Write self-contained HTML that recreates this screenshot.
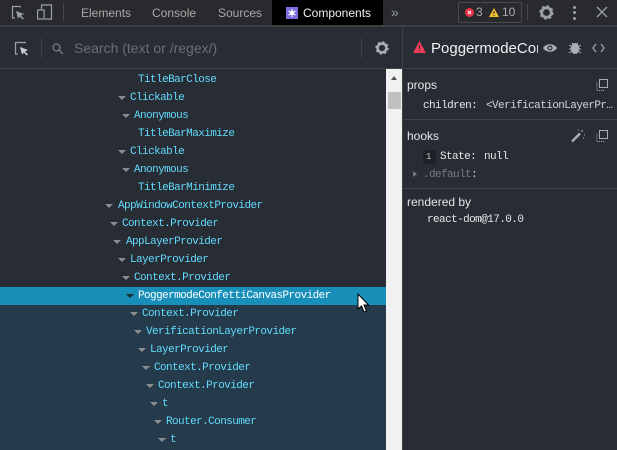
<!DOCTYPE html>
<html><head><meta charset="utf-8">
<style>
html,body{margin:0;padding:0;background:#282c34}
#r{position:relative;width:617px;height:450px;overflow:hidden;background:#282c34;font-family:"Liberation Sans",sans-serif}
.a{position:absolute;white-space:nowrap}
.t{font-size:12px;color:#a9a9a9;top:6px;line-height:14px}
.m{font-family:"Liberation Mono",monospace;font-size:11px;letter-spacing:-.58px;line-height:18px;margin-top:1px}
.row{position:absolute;height:18px;color:#61dafb;white-space:nowrap;font-family:"Liberation Mono",monospace;font-size:11px;letter-spacing:-.58px;line-height:18px;margin-top:1px}
.tri{position:absolute;width:0;height:0;margin-left:-1px;border-left:4px solid transparent;border-right:4px solid transparent;border-top:4px solid #8a8d92}
svg{position:absolute;overflow:visible}
</style></head><body><div id="r">
<div class="a" style="left:0;top:0;width:617px;height:25px;background:#292a2d"></div>
<div class="a" style="left:0;top:25px;width:617px;height:2px;background:#3d3e41"></div>
<svg style="left:11px;top:5px" width="14" height="15" fill="none"><path d="M10 1.500H1.500V13H4" stroke="#9aa0a6" stroke-width="1.200"/><path d="M5 6l8 3-3 1.500 3 3-1.500 1-2.500-3-2 2z" fill="#9aa0a6"/></svg>
<svg style="left:37px;top:4px" width="16" height="16" fill="none" stroke="#9aa0a6" stroke-width="1.200"><path d="M4.500 6V1h10v14H8"/><rect x="0.600" y="6" width="6.500" height="9"/></svg>
<div class="a" style="left:63px;top:4px;width:1px;height:16px;background:#47484b"></div>
<div class="a t" style="left:81px">Elements</div>
<div class="a t" style="left:152px">Console</div>
<div class="a t" style="left:218px">Sources</div>
<div class="a" style="left:272px;top:0;width:111px;height:25px;background:#000"></div>
<div class="a" style="left:286px;top:7px;width:12px;height:12px;background:#7d6fe0"></div>
<svg style="left:286px;top:7px" width="12" height="12" stroke="#fff" stroke-width="1.100"><path d="M6 2v8M2.500 4l7 4M9.500 4l-7 4"/><circle cx="6" cy="6" r="2" fill="#fff" stroke="none"/></svg>
<div class="a t" style="left:303px;color:#f1f1f1">Components</div>
<div class="a" style="left:391px;top:3px;font-size:14px;line-height:18px;color:#9aa0a6">»</div>
<div class="a" style="left:458px;top:2px;width:62px;height:19px;border:1px solid #4a4b4e;border-radius:2px"></div>
<div class="a" style="left:465px;top:8px;width:9px;height:9px;border-radius:50%;background:#e8334b"></div>
<svg style="left:465px;top:8px" width="9" height="9" stroke="#fff" stroke-width="1"><path d="M3 3l3 3M6 3l-3 3"/></svg>
<div class="a" style="left:476px;top:5px;font-size:12px;line-height:14px;color:#a9a9a9">3</div>
<svg style="left:489px;top:8px" width="10" height="9"><path d="M5 0l5 9H0z" fill="#f2c12e"/><path d="M4.500 3h1v3h-1zM4.500 7h1v1h-1z" fill="#222"/></svg>
<div class="a" style="left:502px;top:5px;font-size:12px;line-height:14px;color:#a9a9a9">10</div>
<div class="a" style="left:527px;top:4px;width:1px;height:16px;background:#47484b"></div>
<svg style="left:539px;top:5px" width="15" height="15"><circle cx="7.500" cy="7.500" r="4.800" fill="none" stroke="#9aa0a6" stroke-width="2.800"/><circle cx="7.500" cy="7.500" r="6.200" fill="none" stroke="#9aa0a6" stroke-width="2" stroke-dasharray="2.400 2.470"/></svg>
<div class="a" style="left:573px;top:6px;width:3px;height:3px;border-radius:50%;background:#9aa0a6;box-shadow:0 5px 0 #9aa0a6,0 11px 0 #9aa0a6"></div>
<svg style="left:597px;top:7px" width="10" height="10" stroke="#9aa0a6" stroke-width="1.300"><path d="M0 0l10 10M10 0L0 10"/></svg>

<div class="a" style="left:0;top:27px;width:402px;height:42px;background:#282c34"></div>
<div class="a" style="left:0;top:68px;width:617px;height:1px;background:#3d4148"></div>
<svg style="left:14px;top:41px" width="15" height="15" fill="none"><path d="M12 1.500H1.500V13H4" stroke="#9aa0a6" stroke-width="1.200"/><path d="M6 6l8 3-3 1.500 3 3-1.500 1-2.500-3-2 2z" fill="#c8cacc"/></svg>
<div class="a" style="left:41px;top:38px;width:1px;height:20px;background:#3d4148"></div>
<svg style="left:52px;top:43px" width="12" height="12" fill="none" stroke="#777b81" stroke-width="1.300"><circle cx="4.500" cy="4.500" r="3.500"/><path d="M7 7l4 4"/></svg>
<div class="a" style="left:74px;top:40px;font-size:14px;line-height:17px;color:#6b6e73">Search (text or /regex/)</div>
<div class="a" style="left:361px;top:38px;width:1px;height:20px;background:#3d4148"></div>
<svg style="left:375px;top:41px" width="14" height="14"><circle cx="7" cy="7" r="4.400" fill="none" stroke="#a9acb0" stroke-width="2.600"/><circle cx="7" cy="7" r="5.800" fill="none" stroke="#a9acb0" stroke-width="1.800" stroke-dasharray="2.300 2.250"/></svg>

<div class="a" style="left:0;top:69px;width:386px;height:381px;background:#282c34"></div>
<div class="a" style="left:0;top:304px;width:386px;height:146px;background:#253a4a"></div>
<div class="a" style="left:0;top:287px;width:386px;height:18px;background:#178fb9"></div>

<div class="row" style="left:138px;top:70px">TitleBarClose</div>
<div class="tri" style="left:119px;top:96px"></div><div class="row" style="left:130px;top:88px">Clickable</div>
<div class="tri" style="left:123px;top:114px"></div><div class="row" style="left:134px;top:106px">Anonymous</div>
<div class="row" style="left:138px;top:124px">TitleBarMaximize</div>
<div class="tri" style="left:119px;top:150px"></div><div class="row" style="left:130px;top:142px">Clickable</div>
<div class="tri" style="left:123px;top:168px"></div><div class="row" style="left:134px;top:160px">Anonymous</div>
<div class="row" style="left:138px;top:178px">TitleBarMinimize</div>
<div class="tri" style="left:106px;top:204px"></div><div class="row" style="left:118px;top:196px">AppWindowContextProvider</div>
<div class="tri" style="left:111px;top:222px"></div><div class="row" style="left:122px;top:214px">Context.Provider</div>
<div class="tri" style="left:114px;top:240px"></div><div class="row" style="left:126px;top:232px">AppLayerProvider</div>
<div class="tri" style="left:119px;top:258px"></div><div class="row" style="left:130px;top:250px">LayerProvider</div>
<div class="tri" style="left:123px;top:276px"></div><div class="row" style="left:134px;top:268px">Context.Provider</div>
<div class="tri" style="left:127px;top:294px;border-top-color:#1d2b33"></div><div class="row" style="left:138px;top:286px;color:#fff">PoggermodeConfettiCanvasProvider</div>
<div class="tri" style="left:131px;top:312px"></div><div class="row" style="left:142px;top:304px">Context.Provider</div>
<div class="tri" style="left:135px;top:330px"></div><div class="row" style="left:146px;top:322px">VerificationLayerProvider</div>
<div class="tri" style="left:139px;top:348px"></div><div class="row" style="left:150px;top:340px">LayerProvider</div>
<div class="tri" style="left:143px;top:366px"></div><div class="row" style="left:154px;top:358px">Context.Provider</div>
<div class="tri" style="left:147px;top:384px"></div><div class="row" style="left:158px;top:376px">Context.Provider</div>
<div class="tri" style="left:151px;top:402px"></div><div class="row" style="left:162px;top:394px">t</div>
<div class="tri" style="left:155px;top:420px"></div><div class="row" style="left:166px;top:412px">Router.Consumer</div>
<div class="tri" style="left:159px;top:438px"></div><div class="row" style="left:170px;top:430px">t</div>

<svg style="left:357px;top:293px" width="13" height="20"><path d="M1 1v15l3.500-3 2.500 6 2.500-1-2.500-6h4.500z" fill="#fff" stroke="#000" stroke-width="1"/></svg>

<div class="a" style="left:386px;top:69px;width:16px;height:381px;background:#f1f1f1"></div>
<div class="a" style="left:391px;top:76px;width:0;height:0;border-left:3.500px solid transparent;border-right:3.500px solid transparent;border-bottom:4px solid #505050"></div>
<div class="a" style="left:388px;top:92px;width:13px;height:17px;background:#c0c0c0"></div>
<div class="a" style="left:402px;top:27px;width:1px;height:423px;background:#3d4148"></div>

<svg style="left:413px;top:41px" width="13" height="12"><path d="M6.500 0l6.500 12H0z" fill="#ef3e55"/><path d="M6 4h1v4H6zM6 9h1v1H6z" fill="#282c34"/></svg>
<div class="a" style="left:431px;top:40px;width:107px;overflow:hidden;font-size:15px;line-height:18px;color:#f0f0f0">PoggermodeConfettiCanvasProvider</div>
<svg style="left:543px;top:43px" width="14" height="10"><path d="M0 5C3 0 11 0 14 5 11 10 3 10 0 5z" fill="#a9acb0"/><circle cx="7" cy="5" r="2.500" fill="#282c34"/><circle cx="7" cy="5" r="1.300" fill="#a9acb0"/></svg>
<svg style="left:569px;top:41px" width="12" height="13" stroke="#a9acb0" stroke-width="1"><ellipse cx="6" cy="7.500" rx="3.800" ry="5" fill="#a9acb0"/><path d="M0 4l3 2M12 4L9 6M0 8h3M12 8H9M0 12l3-2M12 12l-3-2M3 2l2 2M9 2L7 4"/></svg>
<svg style="left:592px;top:43px" width="13" height="10" fill="none" stroke="#a9acb0" stroke-width="1.200"><path d="M4 1L1 5l3 4M9 1l3 4-3 4"/></svg>

<div class="a" style="left:407px;top:78px;font-size:12px;line-height:15px;color:#e6e6e6">props</div>
<svg style="left:596px;top:79px" width="12" height="12" fill="none" stroke="#a9acb0"><rect x="3.500" y="0.500" width="8" height="8"/><path d="M1 3.500v8h8" stroke-dasharray="1 1"/></svg>
<div class="a m" style="left:423px;top:96px;color:#e6e6e6">children:</div>
<div class="a m" style="left:486px;top:96px;color:#d4d4d4">&lt;VerificationLayerPr…</div>
<div class="a" style="left:403px;top:119px;width:214px;height:1px;background:#3d4148"></div>

<div class="a" style="left:407px;top:129px;font-size:12px;line-height:15px;color:#e6e6e6">hooks</div>
<svg style="left:571px;top:129px" width="14" height="14"><path d="M1 12.500L9 4.500" stroke="#a9acb0" stroke-width="2.600"/><path d="M11 1v2M13 6h1M7 1h1M12 9h1" stroke="#a9acb0"/></svg>
<svg style="left:596px;top:130px" width="12" height="12" fill="none" stroke="#a9acb0"><rect x="3.500" y="0.500" width="8" height="8"/><path d="M1 3.500v8h8" stroke-dasharray="1 1"/></svg>
<div class="a" style="left:423px;top:150px;width:13px;height:14px;background:#1e2228;border-radius:2px"></div>
<div class="a" style="left:426px;top:148px;font-family:'Liberation Mono',monospace;font-size:9px;line-height:18px;color:#c8c8c8">1</div>
<div class="a m" style="left:440px;top:147px;color:#e6e6e6">State:</div>
<div class="a m" style="left:484px;top:147px;color:#e6e6e6">null</div>
<div class="a" style="left:413px;top:171px;width:0;height:0;border-top:3.500px solid transparent;border-bottom:3.500px solid transparent;border-left:4px solid #777b81"></div>
<div class="a m" style="left:423px;top:165px;color:#777b81">.default<span style="color:#c8c8c8">:</span></div>
<div class="a" style="left:403px;top:188px;width:214px;height:1px;background:#3d4148"></div>

<div class="a" style="left:407px;top:195px;font-size:12px;line-height:15px;color:#e6e6e6">rendered by</div>
<div class="a m" style="left:427px;top:210px;color:#e6e6e6">react-dom@17.0.0</div>
</div></body></html>
